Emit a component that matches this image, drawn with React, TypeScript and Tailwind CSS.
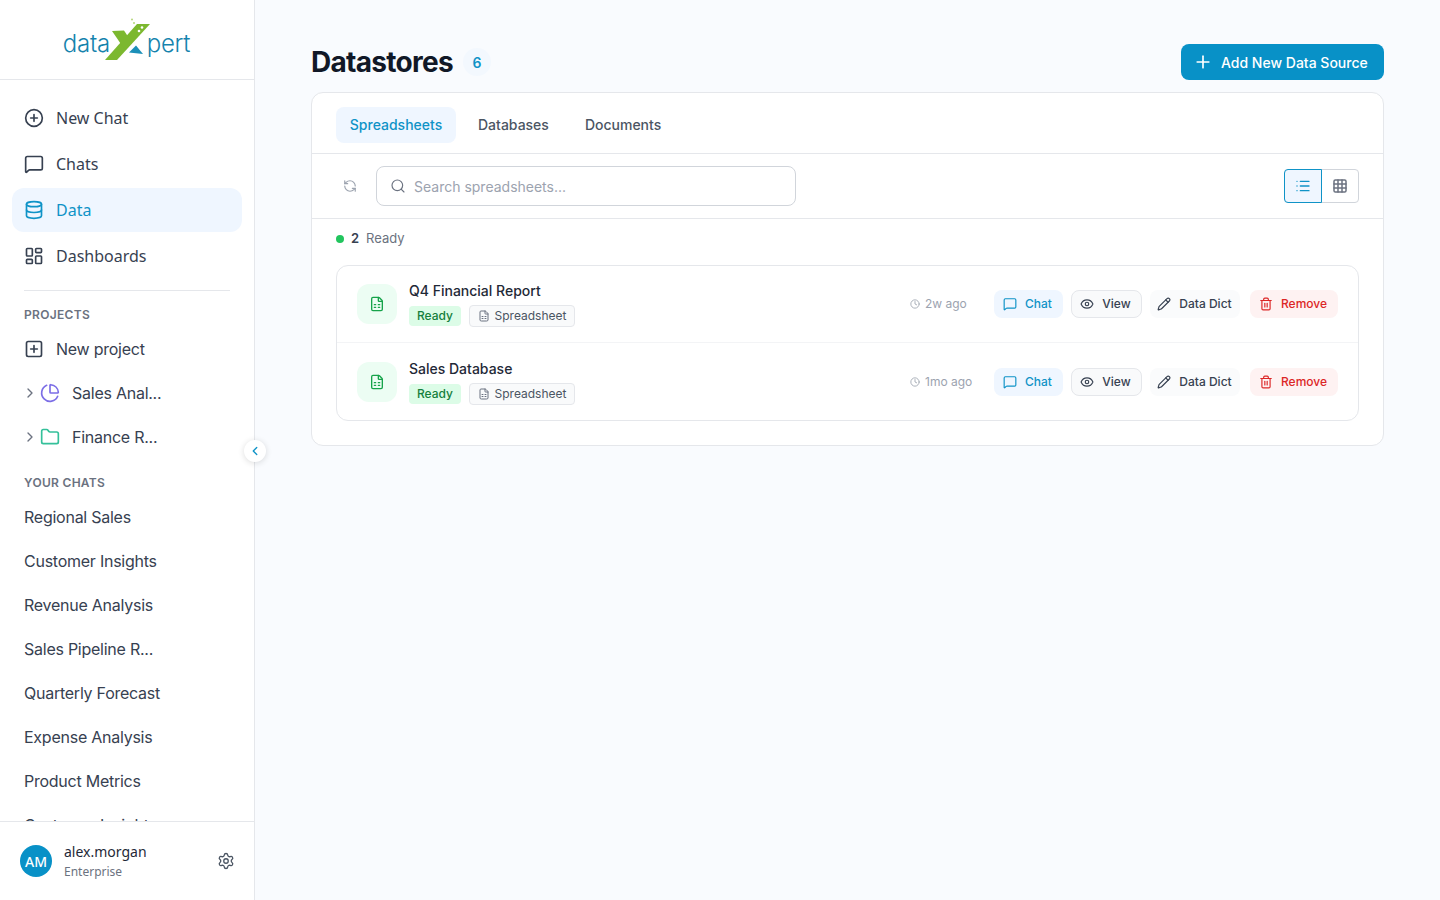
import {
  ChartPie,
  ChevronLeft,
  ChevronRight,
  CirclePlus,
  Clock,
  Database,
  Eye,
  FileSpreadsheet,
  Folder,
  Grid3x3,
  LayoutDashboard,
  List,
  MessageSquare,
  Pencil,
  Plus,
  RefreshCcw,
  Search,
  Settings,
  SquarePlus,
  Trash2,
} from 'lucide-react';

const NAV_ITEMS = [
  { label: 'New Chat', icon: CirclePlus },
  { label: 'Chats', icon: MessageSquare },
  { label: 'Data', icon: Database, active: true },
  { label: 'Dashboards', icon: LayoutDashboard },
];

const CHATS = [
  'Regional Sales',
  'Customer Insights',
  'Revenue Analysis',
  'Sales Pipeline R...',
  'Quarterly Forecast',
  'Expense Analysis',
  'Product Metrics',
  'Customer Insights',
];

const DATASTORES = [
  { name: 'Q4 Financial Report', age: '2w ago' },
  { name: 'Sales Database', age: '1mo ago' },
];

function Logo() {
  return (
    <div className="flex items-center font-['Inter',sans-serif] text-[24px] font-light leading-none tracking-[-0.3px] text-[#1583ad]">
      <span className="relative top-[4px]">data</span>
      <svg width="47" height="44" viewBox="0 0 47 44" className="-mx-[5px] shrink-0">
        <polygon points="32,6 45,6 12,42 0,42" fill="#7cb82f" />
        <polygon points="7,13 19,12.5 27,24.5 20,32" fill="#7cb82f" />
        <polygon points="24,34.5 31,27.5 38,36" fill="#1b8fb8" />
        <circle cx="29" cy="5" r="1" fill="#b5d67a" />
        <circle cx="27" cy="1.5" r="1" fill="#b5d67a" />
        <circle cx="34" cy="13" r="1.3" fill="#fff" />
        <circle cx="37" cy="9.5" r="1.3" fill="#fff" />
      </svg>
      <span className="relative top-[4px]">pert</span>
    </div>
  );
}

function Sidebar() {
  return (
    <aside className="relative flex h-[900px] w-[255px] shrink-0 flex-col border-r border-[#e5e7eb] bg-white">
      <div className="flex h-[80px] shrink-0 items-center justify-center border-b border-[#e5e7eb] pr-[1px]">
        <Logo />
      </div>
      <div className="min-h-0 flex-1 overflow-hidden">
        <nav className="flex flex-col gap-[2px] px-3 pt-4">
          {NAV_ITEMS.map((item) => (
            <div
              key={item.label}
              className={`flex h-[44px] items-center gap-[12px] rounded-xl px-3 font-['Noto_Sans',sans-serif] text-[16px] ${
                item.active ? 'bg-[#eff6ff] text-[#0f93c7]' : 'text-[#374151]'
              }`}
            >
              <item.icon className="h-5 w-5" strokeWidth={2} />
              {item.label}
            </div>
          ))}
        </nav>
        <div className="mx-6 mt-3 border-t border-[#e5e7eb]" />
        <div className="px-6 pt-[16px] font-['Inter',sans-serif] text-[12px] font-semibold leading-[16px] tracking-[0.3px] text-[#6b7280]">
          PROJECTS
        </div>
        <div className="flex flex-col px-6 pt-[4px] font-['Inter',sans-serif] text-[16px] tracking-[-0.25px] text-[#374151]">
          <div className="flex h-[44px] items-center gap-[12px]">
            <SquarePlus className="h-5 w-5" strokeWidth={2} />
            New project
          </div>
          <div className="flex h-[44px] items-center">
            <ChevronRight className="h-4 w-4 -ml-[2px] text-[#6b7280]" strokeWidth={2} />
            <ChartPie className="ml-[2px] h-5 w-5 text-[#7c6ee6]" strokeWidth={2} />
            <span className="ml-[12px]">Sales Anal...</span>
          </div>
          <div className="flex h-[44px] items-center">
            <ChevronRight className="h-4 w-4 -ml-[2px] text-[#6b7280]" strokeWidth={2} />
            <Folder className="ml-[2px] h-5 w-5 text-[#34c09a]" strokeWidth={2} />
            <span className="ml-[12px]">Finance R...</span>
          </div>
        </div>
        <div className="px-6 pt-[16px] font-['Inter',sans-serif] text-[12px] font-semibold leading-[16px] tracking-[0.3px] text-[#6b7280]">
          YOUR CHATS
        </div>
        <div className="flex flex-col px-6 pt-[4px] font-['Inter',sans-serif] text-[16px] tracking-[-0.25px] text-[#374151]">
          {CHATS.map((chat, i) => (
            <div key={i} className="flex h-[44px] shrink-0 items-center">
              {chat}
            </div>
          ))}
        </div>
      </div>
      <div className="flex h-[79px] shrink-0 items-center border-t border-[#e5e7eb] bg-white pl-5 pr-[19px] font-['Noto_Sans',sans-serif]">
        <div className="flex h-8 w-8 items-center justify-center rounded-full bg-[#0891c7] text-[14px] font-medium text-white">
          AM
        </div>
        <div className="ml-3 flex-1">
          <div className="text-[14px] leading-[20px] text-[#1f2937]">alex.morgan</div>
          <div className="mt-px text-[12px] leading-[18px] text-[#6b7280]">Enterprise</div>
        </div>
        <Settings className="h-[18px] w-[18px] text-[#4b5563]" strokeWidth={1.75} />
      </div>
      <button className="absolute -right-[12px] top-[440px] z-10 flex h-[22px] w-[22px] items-center justify-center rounded-full bg-white shadow-[0_1px_6px_rgba(0,0,0,0.14)]">
        <ChevronLeft className="h-3.5 w-3.5 text-[#0f93c7]" strokeWidth={2.25} />
      </button>
    </aside>
  );
}

function StoreRow({ name, age, last }: { name: string; age: string; last?: boolean }) {
  return (
    <div className={`flex h-[77px] items-center pl-5 pr-5 ${last ? '' : 'border-b border-[#f3f4f6]'}`}>
      <div className="flex h-10 w-10 items-center justify-center rounded-xl bg-[#ecfdf3]">
        <FileSpreadsheet className="h-4 w-4 text-[#16a34a]" strokeWidth={2} />
      </div>
      <div className="ml-3 flex-1">
        <div className="text-[14px] font-medium leading-[20px] text-[#1f2937]">{name}</div>
        <div className="mt-[4px] flex items-center gap-2">
          <span className="flex h-5 w-[52px] items-center justify-center rounded bg-[#dcfce7] text-[12px] font-medium text-[#15803d]">
            Ready
          </span>
          <span className="flex h-[22px] w-[106px] items-center justify-center gap-[5px] rounded border border-[#e5e7eb] bg-[#f9fafb] text-[12px] text-[#4b5563]">
            <FileSpreadsheet className="h-3 w-3 text-[#6b7280]" strokeWidth={2} />
            Spreadsheet
          </span>
        </div>
      </div>
      <div className="flex w-[84px] items-center gap-[5px] text-[12px] text-[#9ca3af]">
        <Clock className="h-[10px] w-[10px]" strokeWidth={2} />
        {age}
      </div>
      <div className="flex items-center text-[12px] font-medium">
        <button className="flex h-7 w-[69px] items-center justify-center gap-[8px] rounded-lg bg-[#eff6ff] pr-[2px] text-[#0f93c7]">
          <MessageSquare className="h-[14px] w-[14px]" strokeWidth={2} />
          Chat
        </button>
        <button className="ml-2 flex h-7 w-[71px] items-center justify-center gap-[8px] rounded-lg border border-[#e5e7eb] bg-[#f9fafb] pr-[2px] text-[#374151]">
          <Eye className="h-[14px] w-[14px]" strokeWidth={2} />
          View
        </button>
        <button className="ml-2 flex h-7 w-[90px] items-center justify-center gap-[8px] rounded-lg bg-[#fafbfc] pr-[1px] text-[#374151]">
          <Pencil className="h-[14px] w-[14px]" strokeWidth={2} />
          Data Dict
        </button>
        <button className="ml-[10px] flex h-7 w-[88px] items-center justify-center gap-[8px] rounded-lg bg-[#fef2f2] pr-[2px] text-[#dc2626]">
          <Trash2 className="h-[14px] w-[14px]" strokeWidth={2} />
          Remove
        </button>
      </div>
    </div>
  );
}

export default function App() {
  return (
    <div className="flex h-[900px] w-[1440px] overflow-hidden bg-[#f9fbfe] font-['Inter',sans-serif]">
      <Sidebar />
      <main className="flex-1 px-14 pt-11">
        <div className="flex h-9 items-center justify-between">
          <div className="flex items-center">
            <h1 className="text-[28px] font-bold tracking-[-0.7px] text-[#111827]">Datastores</h1>
            <span className="ml-[10px] flex h-7 w-7 items-center justify-center rounded-full bg-[#f3f8fe] text-[14px] font-semibold text-[#0f93c7]">
              6
            </span>
          </div>
          <button className="flex h-9 w-[203px] items-center gap-[8px] rounded-lg bg-[#0891c7] pl-[12px] text-[14px] font-medium text-white">
            <Plus className="h-5 w-5" strokeWidth={2} />
            Add New Data Source
          </button>
        </div>
        <section className="mt-3 rounded-xl border border-[#e5e7eb] bg-white">
          <div className="flex h-[61px] items-center gap-2 border-b border-[#e5e7eb] px-6 pt-[4px] text-[14px] font-medium">
            <div className="flex h-9 w-[120px] items-center justify-center rounded-lg bg-[#eff6ff] pb-[2px] text-[#0f93c7]">
              Spreadsheets
            </div>
            <div className="flex h-9 items-center px-[14px] pb-[2px] text-[#4b5563]">Databases</div>
            <div className="flex h-9 items-center px-[14px] pb-[2px] text-[#4b5563]">Documents</div>
          </div>
          <div className="flex h-[65px] items-center border-b border-[#e5e7eb] pl-[31px] pr-6">
            <RefreshCcw className="h-[14px] w-[14px] text-[#9ca3af]" strokeWidth={2} />
            <div className="ml-[19px] flex h-10 w-[420px] items-center gap-2 rounded-lg border border-[#d1d5db] px-[13px] text-[14px] text-[#9ca3af]">
              <Search className="h-4 w-4 text-[#6b7280]" strokeWidth={1.75} />
              Search spreadsheets...
            </div>
            <div className="ml-auto flex h-[34px] w-[75px] rounded border border-[#d1d5db]">
              <div className="-m-px flex h-[34px] w-[38px] shrink-0 items-center justify-center rounded-l border border-[#0f93c7] bg-[#eff6ff]">
                <List className="h-4 w-4 text-[#0f93c7]" strokeWidth={2} />
              </div>
              <div className="flex flex-1 items-center justify-center">
                <Grid3x3 className="h-4 w-4 text-[#6b7280]" strokeWidth={2.25} />
              </div>
            </div>
          </div>
          <div className="px-6 pb-6">
            <div className="flex h-[40px] items-center pb-[1px] text-[13px]">
              <span className="h-2 w-2 rounded-full bg-[#22c55e]" />
              <span className="ml-[7px] font-semibold text-[#374151]">2</span>
              <span className="ml-[7px] text-[#6b7280]">Ready</span>
            </div>
            <div className="mt-[6px] rounded-xl border border-[#e5e7eb]">
              {DATASTORES.map((store, i) => (
                <StoreRow key={store.name} name={store.name} age={store.age} last={i === DATASTORES.length - 1} />
              ))}
            </div>
          </div>
        </section>
      </main>
    </div>
  );
}
